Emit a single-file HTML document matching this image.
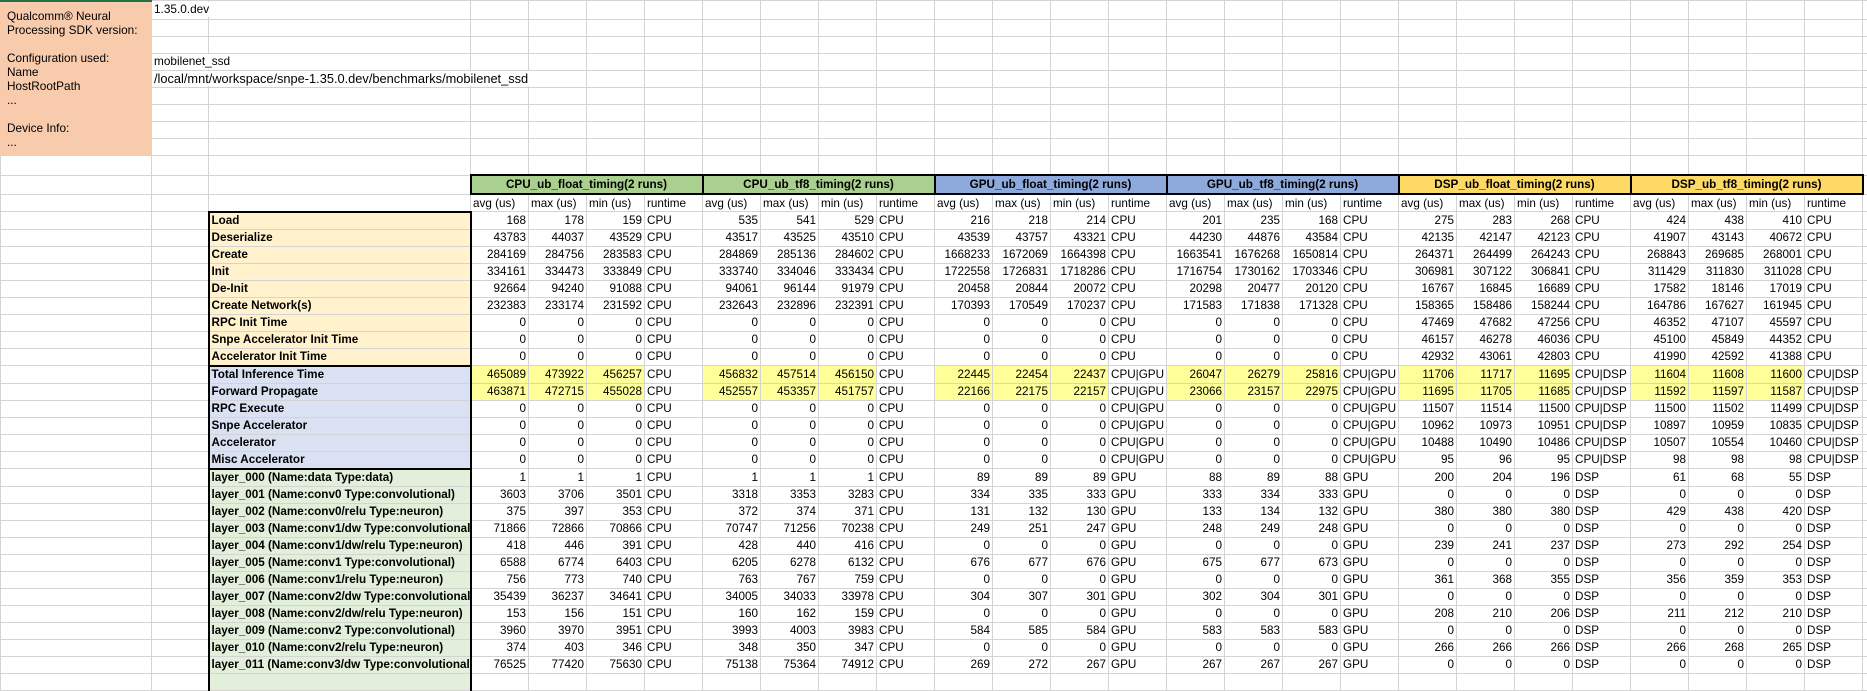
<!DOCTYPE html>
<html><head><meta charset="utf-8">
<style>
html,body{margin:0;padding:0;background:#fff;width:1867px;height:676px;overflow:hidden}
table{border-collapse:collapse;table-layout:fixed;position:absolute;left:0;top:0;width:1867px}
td{border:1px solid #d4d4d4;height:16px;line-height:16px;padding:0 2px;text-align:right;white-space:nowrap;overflow:hidden;font:11.7px "Liberation Sans",sans-serif;color:#000}
td.r{text-align:left}
td.y{background:#ffff99}
td.L{text-align:left;font-weight:bold;border-left:2px solid #000;border-right:2px solid #000}
.s1{background:#fff2cc}.s2{background:#d9e1f2}.s3{background:#e2efda}
td.tp{border-top:2px solid #000}td.bt{border-bottom:2px solid #000}
td.h{text-align:center;font-weight:bold;border:2px solid #000}
.g{background:#a9d08e}.b{background:#8ea9db}.o{background:#ffd966}
td.hd{text-align:left}
tr.t1 td{height:18px;line-height:18px}
tr.hh td{height:17px;line-height:17px}
.ov{position:absolute;background:#fff;font:11.8px "Liberation Sans",sans-serif;height:15px;line-height:15px;padding-left:2px}
.orange{position:absolute;left:0;top:2px;width:151px;height:154px;background:#f8cbad;font:11.8px "Liberation Sans",sans-serif;line-height:14px;padding:0;}
.orange div{padding-left:7px;height:14px}
</style></head><body>
<table>
<colgroup><col style="width:151px"><col style="width:57px"><col style="width:262px">
<col style="width:58px"><col style="width:58px"><col style="width:58px"><col style="width:58px">
<col style="width:58px"><col style="width:58px"><col style="width:58px"><col style="width:58px">
<col style="width:58px"><col style="width:58px"><col style="width:58px"><col style="width:58px">
<col style="width:58px"><col style="width:58px"><col style="width:58px"><col style="width:58px">
<col style="width:58px"><col style="width:58px"><col style="width:58px"><col style="width:58px">
<col style="width:58px"><col style="width:58px"><col style="width:58px"><col style="width:58px">
<col style="width:5px"></colgroup>
<tr class="t1"><td style="width:151px"></td><td style="width:57px"></td><td style="width:262px"></td><td></td><td></td><td></td><td></td><td></td><td></td><td></td><td></td><td></td><td></td><td></td><td></td><td></td><td></td><td></td><td></td><td></td><td></td><td></td><td></td><td></td><td></td><td></td><td></td><td></td></tr>
<tr><td></td><td></td><td></td><td></td><td></td><td></td><td></td><td></td><td></td><td></td><td></td><td></td><td></td><td></td><td></td><td></td><td></td><td></td><td></td><td></td><td></td><td></td><td></td><td></td><td></td><td></td><td></td><td></td></tr>
<tr><td></td><td></td><td></td><td></td><td></td><td></td><td></td><td></td><td></td><td></td><td></td><td></td><td></td><td></td><td></td><td></td><td></td><td></td><td></td><td></td><td></td><td></td><td></td><td></td><td></td><td></td><td></td><td></td></tr>
<tr><td></td><td></td><td></td><td></td><td></td><td></td><td></td><td></td><td></td><td></td><td></td><td></td><td></td><td></td><td></td><td></td><td></td><td></td><td></td><td></td><td></td><td></td><td></td><td></td><td></td><td></td><td></td><td></td></tr>
<tr><td></td><td></td><td></td><td></td><td></td><td></td><td></td><td></td><td></td><td></td><td></td><td></td><td></td><td></td><td></td><td></td><td></td><td></td><td></td><td></td><td></td><td></td><td></td><td></td><td></td><td></td><td></td><td></td></tr>
<tr><td></td><td></td><td></td><td></td><td></td><td></td><td></td><td></td><td></td><td></td><td></td><td></td><td></td><td></td><td></td><td></td><td></td><td></td><td></td><td></td><td></td><td></td><td></td><td></td><td></td><td></td><td></td><td></td></tr>
<tr><td></td><td></td><td></td><td></td><td></td><td></td><td></td><td></td><td></td><td></td><td></td><td></td><td></td><td></td><td></td><td></td><td></td><td></td><td></td><td></td><td></td><td></td><td></td><td></td><td></td><td></td><td></td><td></td></tr>
<tr><td></td><td></td><td></td><td></td><td></td><td></td><td></td><td></td><td></td><td></td><td></td><td></td><td></td><td></td><td></td><td></td><td></td><td></td><td></td><td></td><td></td><td></td><td></td><td></td><td></td><td></td><td></td><td></td></tr>
<tr><td></td><td></td><td></td><td></td><td></td><td></td><td></td><td></td><td></td><td></td><td></td><td></td><td></td><td></td><td></td><td></td><td></td><td></td><td></td><td></td><td></td><td></td><td></td><td></td><td></td><td></td><td></td><td></td></tr>
<tr class="t1"><td></td><td></td><td></td><td></td><td></td><td></td><td></td><td></td><td></td><td></td><td></td><td></td><td></td><td></td><td></td><td></td><td></td><td></td><td></td><td></td><td></td><td></td><td></td><td></td><td></td><td></td><td></td><td></td></tr>
<tr class="hh"><td></td><td></td><td></td><td colspan="4" class="h g">CPU_ub_float_timing(2 runs)</td><td colspan="4" class="h g">CPU_ub_tf8_timing(2 runs)</td><td colspan="4" class="h b">GPU_ub_float_timing(2 runs)</td><td colspan="4" class="h b">GPU_ub_tf8_timing(2 runs)</td><td colspan="4" class="h o">DSP_ub_float_timing(2 runs)</td><td colspan="4" class="h o">DSP_ub_tf8_timing(2 runs)</td><td></td></tr>
<tr><td></td><td></td><td></td><td class="hd">avg (us)</td><td class="hd">max (us)</td><td class="hd">min (us)</td><td class="hd">runtime</td><td class="hd">avg (us)</td><td class="hd">max (us)</td><td class="hd">min (us)</td><td class="hd">runtime</td><td class="hd">avg (us)</td><td class="hd">max (us)</td><td class="hd">min (us)</td><td class="hd">runtime</td><td class="hd">avg (us)</td><td class="hd">max (us)</td><td class="hd">min (us)</td><td class="hd">runtime</td><td class="hd">avg (us)</td><td class="hd">max (us)</td><td class="hd">min (us)</td><td class="hd">runtime</td><td class="hd">avg (us)</td><td class="hd">max (us)</td><td class="hd">min (us)</td><td class="hd">runtime</td><td></td></tr>
<tr><td></td><td></td><td class="L s1 tp">Load</td><td>168</td><td>178</td><td>159</td><td class="r">CPU</td><td>535</td><td>541</td><td>529</td><td class="r">CPU</td><td>216</td><td>218</td><td>214</td><td class="r">CPU</td><td>201</td><td>235</td><td>168</td><td class="r">CPU</td><td>275</td><td>283</td><td>268</td><td class="r">CPU</td><td>424</td><td>438</td><td>410</td><td class="r">CPU</td><td></td></tr>
<tr><td></td><td></td><td class="L s1">Deserialize</td><td>43783</td><td>44037</td><td>43529</td><td class="r">CPU</td><td>43517</td><td>43525</td><td>43510</td><td class="r">CPU</td><td>43539</td><td>43757</td><td>43321</td><td class="r">CPU</td><td>44230</td><td>44876</td><td>43584</td><td class="r">CPU</td><td>42135</td><td>42147</td><td>42123</td><td class="r">CPU</td><td>41907</td><td>43143</td><td>40672</td><td class="r">CPU</td><td></td></tr>
<tr><td></td><td></td><td class="L s1">Create</td><td>284169</td><td>284756</td><td>283583</td><td class="r">CPU</td><td>284869</td><td>285136</td><td>284602</td><td class="r">CPU</td><td>1668233</td><td>1672069</td><td>1664398</td><td class="r">CPU</td><td>1663541</td><td>1676268</td><td>1650814</td><td class="r">CPU</td><td>264371</td><td>264499</td><td>264243</td><td class="r">CPU</td><td>268843</td><td>269685</td><td>268001</td><td class="r">CPU</td><td></td></tr>
<tr><td></td><td></td><td class="L s1">Init</td><td>334161</td><td>334473</td><td>333849</td><td class="r">CPU</td><td>333740</td><td>334046</td><td>333434</td><td class="r">CPU</td><td>1722558</td><td>1726831</td><td>1718286</td><td class="r">CPU</td><td>1716754</td><td>1730162</td><td>1703346</td><td class="r">CPU</td><td>306981</td><td>307122</td><td>306841</td><td class="r">CPU</td><td>311429</td><td>311830</td><td>311028</td><td class="r">CPU</td><td></td></tr>
<tr><td></td><td></td><td class="L s1">De-Init</td><td>92664</td><td>94240</td><td>91088</td><td class="r">CPU</td><td>94061</td><td>96144</td><td>91979</td><td class="r">CPU</td><td>20458</td><td>20844</td><td>20072</td><td class="r">CPU</td><td>20298</td><td>20477</td><td>20120</td><td class="r">CPU</td><td>16767</td><td>16845</td><td>16689</td><td class="r">CPU</td><td>17582</td><td>18146</td><td>17019</td><td class="r">CPU</td><td></td></tr>
<tr><td></td><td></td><td class="L s1">Create Network(s)</td><td>232383</td><td>233174</td><td>231592</td><td class="r">CPU</td><td>232643</td><td>232896</td><td>232391</td><td class="r">CPU</td><td>170393</td><td>170549</td><td>170237</td><td class="r">CPU</td><td>171583</td><td>171838</td><td>171328</td><td class="r">CPU</td><td>158365</td><td>158486</td><td>158244</td><td class="r">CPU</td><td>164786</td><td>167627</td><td>161945</td><td class="r">CPU</td><td></td></tr>
<tr><td></td><td></td><td class="L s1">RPC Init Time</td><td>0</td><td>0</td><td>0</td><td class="r">CPU</td><td>0</td><td>0</td><td>0</td><td class="r">CPU</td><td>0</td><td>0</td><td>0</td><td class="r">CPU</td><td>0</td><td>0</td><td>0</td><td class="r">CPU</td><td>47469</td><td>47682</td><td>47256</td><td class="r">CPU</td><td>46352</td><td>47107</td><td>45597</td><td class="r">CPU</td><td></td></tr>
<tr><td></td><td></td><td class="L s1">Snpe Accelerator Init Time</td><td>0</td><td>0</td><td>0</td><td class="r">CPU</td><td>0</td><td>0</td><td>0</td><td class="r">CPU</td><td>0</td><td>0</td><td>0</td><td class="r">CPU</td><td>0</td><td>0</td><td>0</td><td class="r">CPU</td><td>46157</td><td>46278</td><td>46036</td><td class="r">CPU</td><td>45100</td><td>45849</td><td>44352</td><td class="r">CPU</td><td></td></tr>
<tr><td></td><td></td><td class="L s1 bt">Accelerator Init Time</td><td>0</td><td>0</td><td>0</td><td class="r">CPU</td><td>0</td><td>0</td><td>0</td><td class="r">CPU</td><td>0</td><td>0</td><td>0</td><td class="r">CPU</td><td>0</td><td>0</td><td>0</td><td class="r">CPU</td><td>42932</td><td>43061</td><td>42803</td><td class="r">CPU</td><td>41990</td><td>42592</td><td>41388</td><td class="r">CPU</td><td></td></tr>
<tr><td></td><td></td><td class="L s2 tp">Total Inference Time</td><td class="y">465089</td><td class="y">473922</td><td class="y">456257</td><td class="r">CPU</td><td class="y">456832</td><td class="y">457514</td><td class="y">456150</td><td class="r">CPU</td><td class="y">22445</td><td class="y">22454</td><td class="y">22437</td><td class="r">CPU|GPU</td><td class="y">26047</td><td class="y">26279</td><td class="y">25816</td><td class="r">CPU|GPU</td><td class="y">11706</td><td class="y">11717</td><td class="y">11695</td><td class="r">CPU|DSP</td><td class="y">11604</td><td class="y">11608</td><td class="y">11600</td><td class="r">CPU|DSP</td><td></td></tr>
<tr><td></td><td></td><td class="L s2">Forward Propagate</td><td class="y">463871</td><td class="y">472715</td><td class="y">455028</td><td class="r">CPU</td><td class="y">452557</td><td class="y">453357</td><td class="y">451757</td><td class="r">CPU</td><td class="y">22166</td><td class="y">22175</td><td class="y">22157</td><td class="r">CPU|GPU</td><td class="y">23066</td><td class="y">23157</td><td class="y">22975</td><td class="r">CPU|GPU</td><td class="y">11695</td><td class="y">11705</td><td class="y">11685</td><td class="r">CPU|DSP</td><td class="y">11592</td><td class="y">11597</td><td class="y">11587</td><td class="r">CPU|DSP</td><td></td></tr>
<tr><td></td><td></td><td class="L s2">RPC Execute</td><td>0</td><td>0</td><td>0</td><td class="r">CPU</td><td>0</td><td>0</td><td>0</td><td class="r">CPU</td><td>0</td><td>0</td><td>0</td><td class="r">CPU|GPU</td><td>0</td><td>0</td><td>0</td><td class="r">CPU|GPU</td><td>11507</td><td>11514</td><td>11500</td><td class="r">CPU|DSP</td><td>11500</td><td>11502</td><td>11499</td><td class="r">CPU|DSP</td><td></td></tr>
<tr><td></td><td></td><td class="L s2">Snpe Accelerator</td><td>0</td><td>0</td><td>0</td><td class="r">CPU</td><td>0</td><td>0</td><td>0</td><td class="r">CPU</td><td>0</td><td>0</td><td>0</td><td class="r">CPU|GPU</td><td>0</td><td>0</td><td>0</td><td class="r">CPU|GPU</td><td>10962</td><td>10973</td><td>10951</td><td class="r">CPU|DSP</td><td>10897</td><td>10959</td><td>10835</td><td class="r">CPU|DSP</td><td></td></tr>
<tr><td></td><td></td><td class="L s2">Accelerator</td><td>0</td><td>0</td><td>0</td><td class="r">CPU</td><td>0</td><td>0</td><td>0</td><td class="r">CPU</td><td>0</td><td>0</td><td>0</td><td class="r">CPU|GPU</td><td>0</td><td>0</td><td>0</td><td class="r">CPU|GPU</td><td>10488</td><td>10490</td><td>10486</td><td class="r">CPU|DSP</td><td>10507</td><td>10554</td><td>10460</td><td class="r">CPU|DSP</td><td></td></tr>
<tr><td></td><td></td><td class="L s2 bt">Misc Accelerator</td><td>0</td><td>0</td><td>0</td><td class="r">CPU</td><td>0</td><td>0</td><td>0</td><td class="r">CPU</td><td>0</td><td>0</td><td>0</td><td class="r">CPU|GPU</td><td>0</td><td>0</td><td>0</td><td class="r">CPU|GPU</td><td>95</td><td>96</td><td>95</td><td class="r">CPU|DSP</td><td>98</td><td>98</td><td>98</td><td class="r">CPU|DSP</td><td></td></tr>
<tr><td></td><td></td><td class="L s3 tp">layer_000 (Name:data Type:data)</td><td>1</td><td>1</td><td>1</td><td class="r">CPU</td><td>1</td><td>1</td><td>1</td><td class="r">CPU</td><td>89</td><td>89</td><td>89</td><td class="r">GPU</td><td>88</td><td>89</td><td>88</td><td class="r">GPU</td><td>200</td><td>204</td><td>196</td><td class="r">DSP</td><td>61</td><td>68</td><td>55</td><td class="r">DSP</td><td></td></tr>
<tr><td></td><td></td><td class="L s3">layer_001 (Name:conv0 Type:convolutional)</td><td>3603</td><td>3706</td><td>3501</td><td class="r">CPU</td><td>3318</td><td>3353</td><td>3283</td><td class="r">CPU</td><td>334</td><td>335</td><td>333</td><td class="r">GPU</td><td>333</td><td>334</td><td>333</td><td class="r">GPU</td><td>0</td><td>0</td><td>0</td><td class="r">DSP</td><td>0</td><td>0</td><td>0</td><td class="r">DSP</td><td></td></tr>
<tr><td></td><td></td><td class="L s3">layer_002 (Name:conv0/relu Type:neuron)</td><td>375</td><td>397</td><td>353</td><td class="r">CPU</td><td>372</td><td>374</td><td>371</td><td class="r">CPU</td><td>131</td><td>132</td><td>130</td><td class="r">GPU</td><td>133</td><td>134</td><td>132</td><td class="r">GPU</td><td>380</td><td>380</td><td>380</td><td class="r">DSP</td><td>429</td><td>438</td><td>420</td><td class="r">DSP</td><td></td></tr>
<tr><td></td><td></td><td class="L s3">layer_003 (Name:conv1/dw Type:convolutional)</td><td>71866</td><td>72866</td><td>70866</td><td class="r">CPU</td><td>70747</td><td>71256</td><td>70238</td><td class="r">CPU</td><td>249</td><td>251</td><td>247</td><td class="r">GPU</td><td>248</td><td>249</td><td>248</td><td class="r">GPU</td><td>0</td><td>0</td><td>0</td><td class="r">DSP</td><td>0</td><td>0</td><td>0</td><td class="r">DSP</td><td></td></tr>
<tr><td></td><td></td><td class="L s3">layer_004 (Name:conv1/dw/relu Type:neuron)</td><td>418</td><td>446</td><td>391</td><td class="r">CPU</td><td>428</td><td>440</td><td>416</td><td class="r">CPU</td><td>0</td><td>0</td><td>0</td><td class="r">GPU</td><td>0</td><td>0</td><td>0</td><td class="r">GPU</td><td>239</td><td>241</td><td>237</td><td class="r">DSP</td><td>273</td><td>292</td><td>254</td><td class="r">DSP</td><td></td></tr>
<tr><td></td><td></td><td class="L s3">layer_005 (Name:conv1 Type:convolutional)</td><td>6588</td><td>6774</td><td>6403</td><td class="r">CPU</td><td>6205</td><td>6278</td><td>6132</td><td class="r">CPU</td><td>676</td><td>677</td><td>676</td><td class="r">GPU</td><td>675</td><td>677</td><td>673</td><td class="r">GPU</td><td>0</td><td>0</td><td>0</td><td class="r">DSP</td><td>0</td><td>0</td><td>0</td><td class="r">DSP</td><td></td></tr>
<tr><td></td><td></td><td class="L s3">layer_006 (Name:conv1/relu Type:neuron)</td><td>756</td><td>773</td><td>740</td><td class="r">CPU</td><td>763</td><td>767</td><td>759</td><td class="r">CPU</td><td>0</td><td>0</td><td>0</td><td class="r">GPU</td><td>0</td><td>0</td><td>0</td><td class="r">GPU</td><td>361</td><td>368</td><td>355</td><td class="r">DSP</td><td>356</td><td>359</td><td>353</td><td class="r">DSP</td><td></td></tr>
<tr><td></td><td></td><td class="L s3">layer_007 (Name:conv2/dw Type:convolutional)</td><td>35439</td><td>36237</td><td>34641</td><td class="r">CPU</td><td>34005</td><td>34033</td><td>33978</td><td class="r">CPU</td><td>304</td><td>307</td><td>301</td><td class="r">GPU</td><td>302</td><td>304</td><td>301</td><td class="r">GPU</td><td>0</td><td>0</td><td>0</td><td class="r">DSP</td><td>0</td><td>0</td><td>0</td><td class="r">DSP</td><td></td></tr>
<tr><td></td><td></td><td class="L s3">layer_008 (Name:conv2/dw/relu Type:neuron)</td><td>153</td><td>156</td><td>151</td><td class="r">CPU</td><td>160</td><td>162</td><td>159</td><td class="r">CPU</td><td>0</td><td>0</td><td>0</td><td class="r">GPU</td><td>0</td><td>0</td><td>0</td><td class="r">GPU</td><td>208</td><td>210</td><td>206</td><td class="r">DSP</td><td>211</td><td>212</td><td>210</td><td class="r">DSP</td><td></td></tr>
<tr><td></td><td></td><td class="L s3">layer_009 (Name:conv2 Type:convolutional)</td><td>3960</td><td>3970</td><td>3951</td><td class="r">CPU</td><td>3993</td><td>4003</td><td>3983</td><td class="r">CPU</td><td>584</td><td>585</td><td>584</td><td class="r">GPU</td><td>583</td><td>583</td><td>583</td><td class="r">GPU</td><td>0</td><td>0</td><td>0</td><td class="r">DSP</td><td>0</td><td>0</td><td>0</td><td class="r">DSP</td><td></td></tr>
<tr><td></td><td></td><td class="L s3">layer_010 (Name:conv2/relu Type:neuron)</td><td>374</td><td>403</td><td>346</td><td class="r">CPU</td><td>348</td><td>350</td><td>347</td><td class="r">CPU</td><td>0</td><td>0</td><td>0</td><td class="r">GPU</td><td>0</td><td>0</td><td>0</td><td class="r">GPU</td><td>266</td><td>266</td><td>266</td><td class="r">DSP</td><td>266</td><td>268</td><td>265</td><td class="r">DSP</td><td></td></tr>
<tr><td></td><td></td><td class="L s3">layer_011 (Name:conv3/dw Type:convolutional)</td><td>76525</td><td>77420</td><td>75630</td><td class="r">CPU</td><td>75138</td><td>75364</td><td>74912</td><td class="r">CPU</td><td>269</td><td>272</td><td>267</td><td class="r">GPU</td><td>267</td><td>267</td><td>267</td><td class="r">GPU</td><td>0</td><td>0</td><td>0</td><td class="r">DSP</td><td>0</td><td>0</td><td>0</td><td class="r">DSP</td><td></td></tr>
<tr><td></td><td></td><td class="L s3"></td><td></td><td></td><td></td><td></td><td></td><td></td><td></td><td></td><td></td><td></td><td></td><td></td><td></td><td></td><td></td><td></td><td></td><td></td><td></td><td></td><td></td><td></td><td></td><td></td><td></td></tr>
</table>
<div class="orange"><div style="height:7px"></div><div>Qualcomm® Neural</div><div>Processing SDK version:</div><div></div><div>Configuration used:</div><div>Name</div><div>HostRootPath</div><div>...</div><div></div><div>Device Info:</div><div>...</div></div>
<div style="position:absolute;left:0;top:0;width:152px;height:2px;background:#217346"></div>
<div class="ov" style="left:152px;top:2px;width:316px">1.35.0.dev</div>
<div class="ov" style="left:152px;top:54px;width:316px">mobilenet_ssd</div>
<div class="ov" style="left:152px;top:71px;width:375px;font-size:12.8px">/local/mnt/workspace/snpe-1.35.0.dev/benchmarks/mobilenet_ssd</div>
</body></html>
